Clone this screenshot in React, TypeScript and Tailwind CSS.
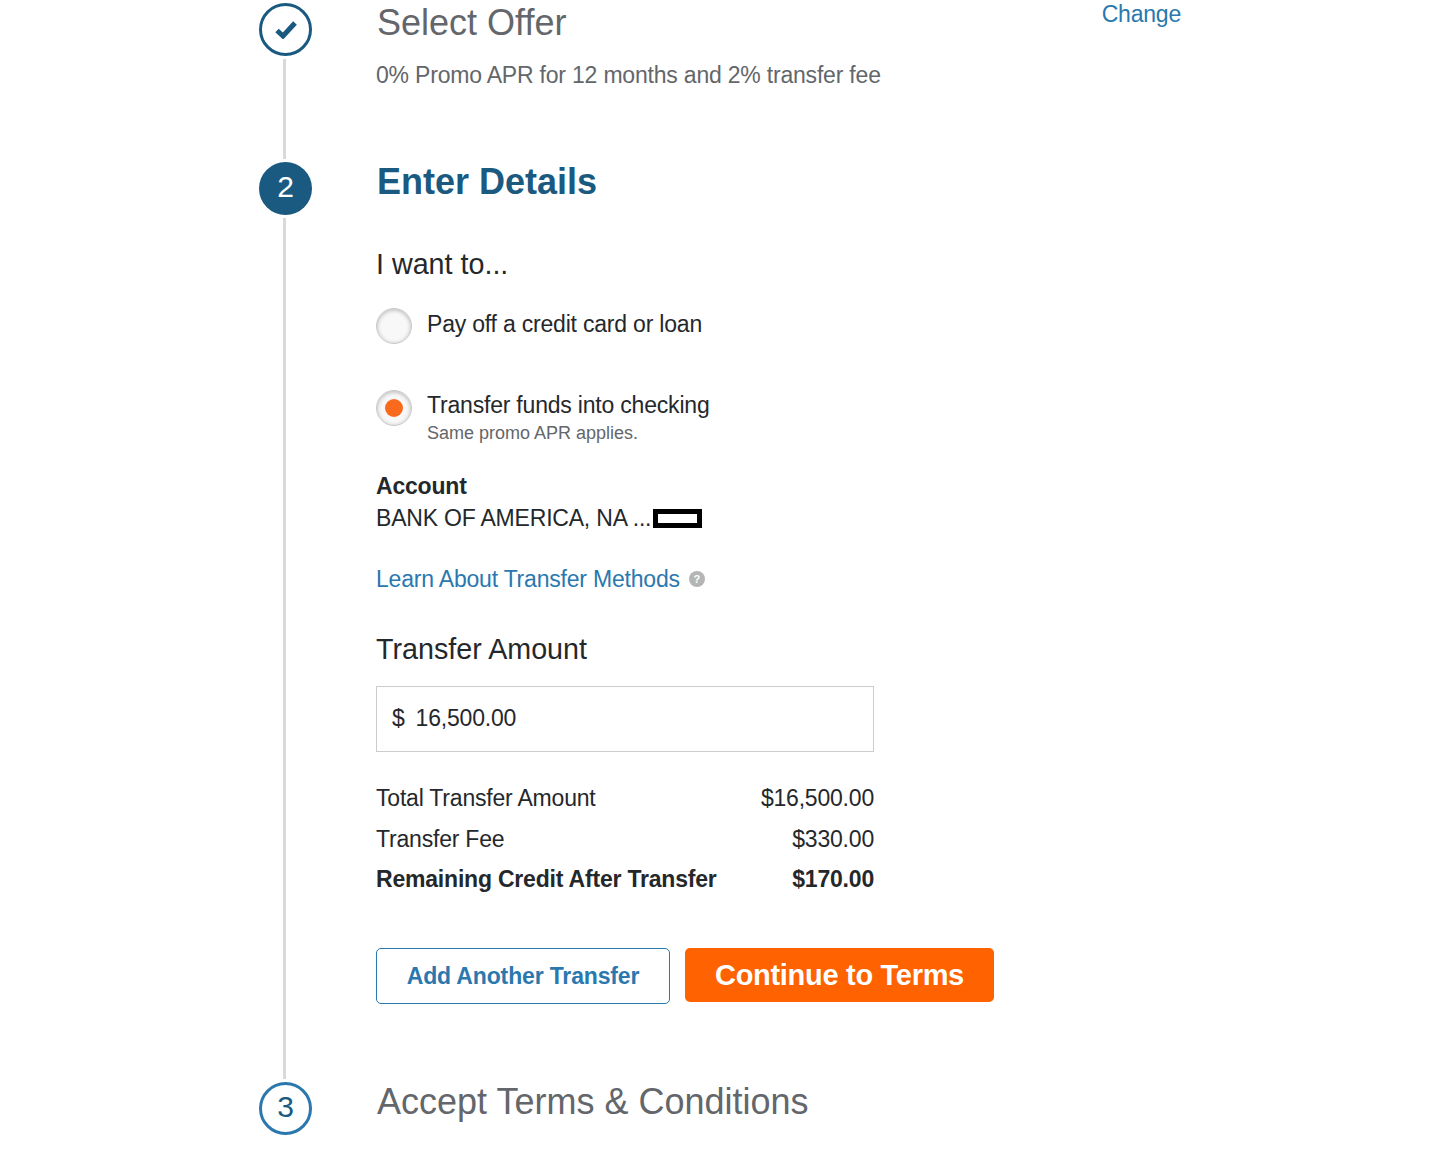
function StepLine() {
  return <div className="my-[3px] ml-[24px] w-[3px] flex-1 self-start bg-[#d9d9d9]" />;
}

function Radio({ checked }: { checked?: boolean }) {
  return (
    <span className="flex h-9 w-9 shrink-0 items-center justify-center rounded-full border border-[#c8c8c8] bg-[#f8f8f8] shadow-[inset_0_1px_4px_rgba(0,0,0,0.28)]">
      {checked && <span className="h-[18px] w-[18px] rounded-full bg-[#f96a1c]" />}
    </span>
  );
}

function SummaryRow({ label, value, bold, height }: { label: string; value: string; bold?: boolean; height: string }) {
  return (
    <div className={`flex items-center justify-between ${height} ${bold ? "font-bold text-[#25282b]" : ""}`}>
      <span>{label}</span>
      <span>{value}</span>
    </div>
  );
}

export default function App() {
  return (
    <div className="h-[1174px] w-full overflow-hidden bg-white pl-[259px] pt-[3px] font-['Liberation_Sans',Arial,sans-serif] text-[23px] tracking-[-0.2px] text-[#25282b]">
      {/* step 1 */}
      <div className="flex h-[159px]">
        <div className="flex w-[53px] flex-col items-center">
          <div className="flex h-[53px] w-[53px] items-center justify-center rounded-full border-[3px] border-[#1b5a80]">
            <svg width="22" height="18" viewBox="0 0 22 18" fill="none" stroke="#1b5a80" strokeWidth="5">
              <path d="M2 9.5l6 5.5L20 2" />
            </svg>
          </div>
          <StepLine />
        </div>
        <div className="ml-[64px] w-[805px]">
          <div className="flex items-start justify-between">
            <h2 className="ml-[1px] mt-[-2px] text-[36px] leading-[44px] tracking-normal text-[#63666a]">Select Offer</h2>
            <a className="mt-[-6px] text-[#2a78ae]">Change</a>
          </div>
          <p className="mt-[16px] leading-[28px] text-[#63666a]">0% Promo APR for 12 months and 2% transfer fee</p>
        </div>
      </div>

      {/* step 2 */}
      <div className="flex h-[920px]">
        <div className="flex w-[53px] flex-col items-center">
          <div className="flex h-[53px] w-[53px] items-center justify-center rounded-full bg-[#1b5a80] pb-1 text-[30px] text-white">2</div>
          <StepLine />
        </div>
        <div className="ml-[64px] flex w-[618px] flex-col">
          <h2 className="ml-[1px] mt-[-2px] text-[36px] font-bold leading-[44px] tracking-normal text-[#1b5a80]">Enter Details</h2>
          <h3 className="mt-[42px] text-[28.7px] leading-[36px] tracking-normal">I want to...</h3>

          <div className="mt-[26px] flex h-9 items-start gap-[15px]">
            <Radio />
            <span className="mt-[2px] leading-[28px]">Pay off a credit card or loan</span>
          </div>

          <div className="mt-[46px] flex items-start gap-[15px]">
            <Radio checked />
            <div>
              <div className="mt-[1px] leading-[28px]">Transfer funds into checking</div>
              <div className="mt-[2px] text-[18px] leading-[24px] tracking-normal text-[#63666a]">Same promo APR applies.</div>
            </div>
          </div>

          <div className="mt-[26px] font-bold leading-[30px]">Account</div>
          <div className="mt-[2px] flex items-center leading-[30px]">
            BANK OF AMERICA, NA ...
            <span className="ml-[2px] h-[19px] w-[49px] border-[5px] border-black bg-white" />
          </div>

          <a className="mt-[31px] flex items-center gap-[9px] leading-[30px] text-[#2a78ae]">
            Learn About Transfer Methods
            <span className="flex h-4 w-4 items-center justify-center rounded-full bg-[#b5b5b5] text-[11px] font-bold leading-none text-white">?</span>
          </a>

          <h3 className="mt-[37px] text-[28.7px] leading-[36px] tracking-normal">Transfer Amount</h3>

          <div className="mt-[19px] flex h-[66px] w-[498px] items-center border border-[#cccccc] pb-[1px] pl-[15px]">
            <span>$</span>
            <span className="ml-[11px]">16,500.00</span>
          </div>

          <div className="mt-[26px] w-[498px]">
            <SummaryRow label="Total Transfer Amount" value="$16,500.00" height="h-[41px]" />
            <SummaryRow label="Transfer Fee" value="$330.00" height="h-[41px]" />
            <SummaryRow label="Remaining Credit After Transfer" value="$170.00" bold height="h-[39px]" />
          </div>

          <div className="mt-[49px] flex items-start gap-[15px]">
            <button className="h-14 w-[294px] rounded-[5px] border border-[#2a78ae] bg-white font-bold tracking-[-0.15px] text-[#2a78ae]">Add Another Transfer</button>
            <button className="h-[54px] w-[309px] rounded-[5px] bg-[#ff6200] pt-[2px] text-[29px] font-bold tracking-[-0.3px] text-white">Continue to Terms</button>
          </div>
        </div>
      </div>

      {/* step 3 */}
      <div className="flex">
        <div className="flex h-[53px] w-[53px] items-center justify-center rounded-full border-[3px] border-[#2a78ae] pb-1 text-[30px] text-[#1b5a80]">3</div>
        <h2 className="ml-[65px] mt-[-2px] text-[36px] leading-[44px] tracking-normal text-[#63666a]">Accept Terms &amp; Conditions</h2>
      </div>
    </div>
  );
}
